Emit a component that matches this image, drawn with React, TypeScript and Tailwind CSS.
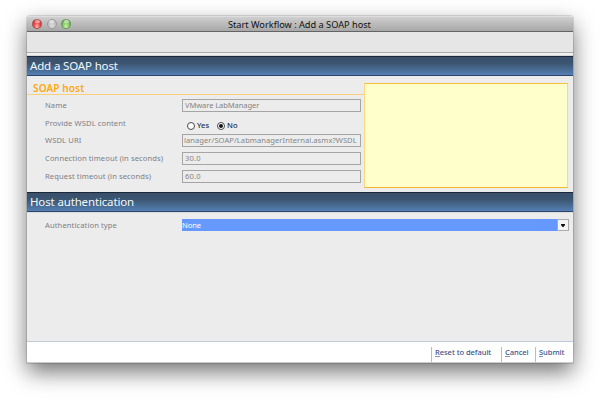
import type { ReactNode } from "react";

function Light({ tone }: { tone: string }) {
  return (
    <span className={`flex h-[10px] w-[10px] justify-center rounded-full border ${tone}`}>
      <span className="h-[3px] w-[5px] rounded-full bg-white/45" />
    </span>
  );
}

function SectionHeader({ children }: { children: ReactNode }) {
  return (
    <h2 className="flex h-[20px] shrink-0 items-center border-t border-b border-t-[#1b2838] border-b-[#2c4568] bg-linear-to-b from-[#3a506c] via-[#3b5570] via-35% to-[#5380b5] pl-[3px] text-[11.5px] leading-none tracking-[-0.15px] whitespace-pre text-[#f4f7fb]">
      {children}
    </h2>
  );
}

function Label({ children, className }: { children: ReactNode; className: string }) {
  return <div className={`w-[137px] shrink-0 text-[7.6px] leading-none tracking-[0.1px] whitespace-nowrap text-[#7e7e84] ${className}`}>{children}</div>;
}

function Field({ children, className }: { children: ReactNode; className: string }) {
  return (
    <div className={`flex h-[13px] w-[179px] items-center overflow-hidden border border-[#a5a5a5] text-[7.6px] leading-none whitespace-nowrap text-[#858585] ${className}`}>
      {children}
    </div>
  );
}

function Radio({ checked }: { checked?: boolean }) {
  return (
    <span className="flex h-[8px] w-[8px] items-center justify-center rounded-full border border-[#4a4a4a] bg-white">
      {checked && <span className="h-[4px] w-[4px] rounded-full bg-[#151515]" />}
    </span>
  );
}

function Action({ first, rest, className }: { first: string; rest: string; className: string }) {
  return (
    <button className={`flex h-[15px] items-start border-l border-[#a9c1dc] pt-[1px] pl-[3px] text-[7.6px] leading-[9px] font-medium tracking-[-0.08px] whitespace-nowrap text-[#40548c] ${className}`}>
      <span className="h-[9px] border-b border-[#8796bd]">{first}</span>
      <span>{rest}</span>
    </button>
  );
}

export default function App() {
  return (
    <div className="h-[400px] w-[600px] overflow-hidden bg-white pt-[16px] pl-[27px] font-['Noto_Sans','Open_Sans',sans-serif]">
      <div className="flex h-[347px] w-[546px] flex-col overflow-hidden rounded-t-[3px] bg-[#ececec] shadow-[0_0_0_1px_rgba(0,0,0,0.12),0_9px_22px_rgba(0,0,0,0.55)]">
        <div className="flex h-[16px] shrink-0 items-center border-t border-b border-t-[#dedede] border-b-[#646464] bg-linear-to-b from-[#cfcfcf] to-[#a7a7a7]">
          <div className="flex w-[201px] shrink-0 gap-[4.4px] pl-[5.4px]">
            <Light tone="border-[#96504d]/70 bg-radial-[at_50%_85%] from-[#ffc0b0] via-[#ee4a50] to-[#c4343a]" />
            <Light tone="border-[#999999] bg-radial-[at_50%_85%] from-[#dddddd] to-[#b4b4b4]" />
            <Light tone="border-[#5b8751]/70 bg-radial-[at_50%_85%] from-[#cdf5a2] via-[#8aca6c] to-[#559c4a]" />
          </div>
          <h1 className="pt-[2px] text-[9.2px] leading-none whitespace-nowrap text-[#111111]">Start Workflow : Add a SOAP host</h1>
        </div>
        <div className="h-[21px] shrink-0 border-b border-[#ababab] bg-[#e6e6e6]" />
        <div className="h-[3px] shrink-0 border-b border-[#d6d6d6] bg-[#f0f0f0]" />
        <SectionHeader>Add a SOAP host</SectionHeader>
        <div className="flex h-[116px] shrink-0">
          <div className="w-[337px]">
            <h3 className="flex h-[19px] items-end border-b border-[#fbd07d] pb-[1px] pl-[6px] text-[10px] leading-none font-semibold tracking-[0.13px] whitespace-nowrap text-[#fda90f]">SOAP host</h3>
            <div className="flex flex-col pl-[18px]">
              <div className="mt-[4px] flex h-[13px] items-center">
                <Label className="">Name</Label>
                <Field className="pl-[2px] tracking-[-0.1px]">VMware LabManager</Field>
              </div>
              <div className="mt-[5px] flex h-[17px] items-center">
                <Label className="pb-[4px]">Provide WSDL content</Label>
                <div className="flex items-center pl-[5px] text-[7.6px] leading-none font-medium text-[#1e2d45]">
                  <Radio />
                  <span className="w-[22px] pl-[2px]">Yes</span>
                  <Radio checked />
                  <span className="pl-[2px]">No</span>
                </div>
              </div>
              <div className="flex h-[13px] items-center">
                <Label className="pt-[1px]">WSDL URI</Label>
                <Field className="pt-[1px] pl-[1px] tracking-[0.04px]">lanager/SOAP/LabmanagerInternal.asmx?WSDL</Field>
              </div>
              <div className="mt-[5px] flex h-[13px] items-center">
                <Label className="">Connection timeout (in seconds)</Label>
                <Field className="pl-[2px] tracking-[0.2px]">30.0</Field>
              </div>
              <div className="mt-[5px] flex h-[13px] items-center">
                <Label className="">Request timeout (in seconds)</Label>
                <Field className="pl-[2px] tracking-[0.2px]">60.0</Field>
              </div>
            </div>
          </div>
          <div className="mt-[7px] h-[105px] w-[204px] border border-t-[#f8bd3a] border-r-[#fdd584] border-b-[#f5b52c] border-l-[#fdd584] bg-[#ffffcc]" />
        </div>
        <SectionHeader>Host authentication</SectionHeader>
        <div className="flex grow items-start border-t border-[#dcdcdc] pt-[6px] pl-[18px]">
          <Label className="pt-[3px]">Authentication type</Label>
          <div className="flex h-[12px] w-[387px] bg-[#6699ff]">
            <span className="grow text-[7.6px] leading-[13px] tracking-[-0.1px] text-white">None</span>
            <span className="flex w-[12px] items-center justify-center border border-[#aaaaaa] bg-[#f4f4f4]">
              <svg width="4" height="3" viewBox="0 0 4 3"><path d="M0 0h4v1L2.5 3h-1L0 1z" fill="#111" /></svg>
            </span>
          </div>
        </div>
        <div className="flex h-[22px] shrink-0 justify-end border-t border-b border-t-[#bfcbd6] border-b-[#cccccc] bg-white pt-[5px]">
          <Action first="R" rest="eset to default" className="w-[70px]" />
          <Action first="C" rest="ancel" className="w-[34px]" />
          <Action first="S" rest="ubmit" className="w-[38px]" />
        </div>
      </div>
    </div>
  );
}
